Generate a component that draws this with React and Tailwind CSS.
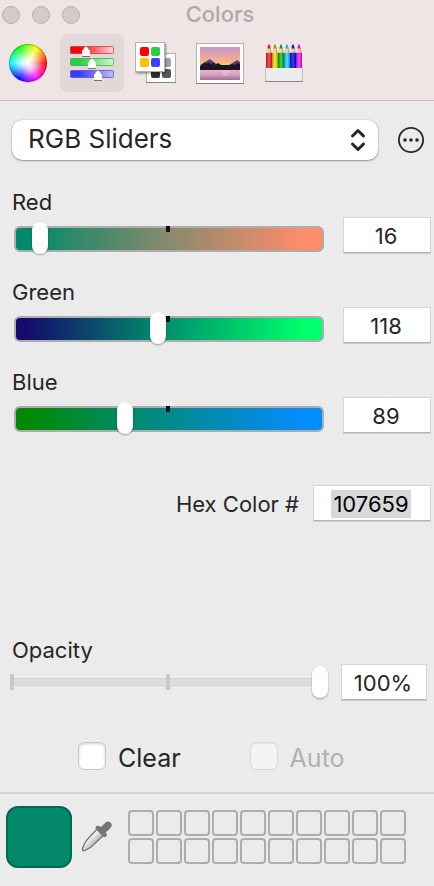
import { useState } from "react";

const TRACKS = {
  red: "bg-[linear-gradient(to_right,#00896b_4%,#848a6c_48%,#ff8c6c_94%)]",
  green: "bg-[linear-gradient(to_right,#150b6c_4%,#008a6c_46%,#00ff6c_94%)]",
  blue: "bg-[linear-gradient(to_right,#008a00_4%,#008a6c_38%,#058cff_94%)]",
};

const RANGE =
  "col-start-1 row-start-1 z-10 m-0 block h-8 w-full cursor-pointer appearance-none bg-transparent outline-none [&::-webkit-slider-runnable-track]:h-8 [&::-webkit-slider-thumb]:h-8 [&::-webkit-slider-thumb]:w-4 [&::-webkit-slider-thumb]:appearance-none [&::-webkit-slider-thumb]:rounded-full [&::-webkit-slider-thumb]:bg-white [&::-webkit-slider-thumb]:shadow-[0_1px_2px_rgba(0,0,0,0.35)]";

const FIELD =
  "h-9 shrink-0 border border-[#d6d6d6] border-b-[#b0b0b0] bg-white pt-0.5 pr-0.5 text-center text-[22px] leading-7 text-[#262626] shadow-[0_1px_0_#cfcfcf] outline-none";

const LABEL = "block text-[22px] leading-[26px]";

function WheelIcon() {
  return (
    <span className="block size-[38px] rounded-full border border-black/25 bg-[radial-gradient(circle,#fff_0%,rgba(255,255,255,0.8)_22%,rgba(255,255,255,0.3)_50%,transparent_70%),conic-gradient(from_90deg,#f00,#f0f,#00f,#0ff,#0f0,#ff0,#f00)] bg-origin-border shadow-[0_1px_1px_rgba(0,0,0,0.15)]" />
  );
}

function SlidersIcon() {
  const rows = [
    { id: "r", y: 2, from: "#ff0000", to: "#ffdada", edge: "#b8302e", x: 16 },
    { id: "g", y: 14, from: "#28cd41", to: "#ccfacb", edge: "#3c9a48", x: 22 },
    { id: "b", y: 26, from: "#3b3bff", to: "#bcbcff", edge: "#4848bc", x: 28 },
  ];
  return (
    <svg width="44" height="38" viewBox="0 0 44 38" aria-hidden="true">
      <defs>
        {rows.map((r) => (
          <linearGradient id={"bar-" + r.id} key={r.id}>
            <stop offset="0.2" stopColor={r.from} />
            <stop offset="1" stopColor={r.to} />
          </linearGradient>
        ))}
        <filter id="knob" x="-50%" y="-50%" width="200%" height="200%">
          <feDropShadow dx="0" dy="1" stdDeviation="0.7" floodOpacity="0.5" />
        </filter>
      </defs>
      {rows.map((r) => (
        <g key={r.id}>
          <rect x="0.5" y={r.y + 0.5} width="43" height="7" rx="1" fill={`url(#bar-${r.id})`} stroke={r.edge} strokeOpacity="0.7" />
          <path
            d={`M${r.x - 4} ${r.y + 5} L${r.x - 1} ${r.y + 1} Q${r.x} ${r.y} ${r.x + 1} ${r.y + 1} L${r.x + 4} ${r.y + 5} V${r.y + 9} Q${r.x + 4} ${r.y + 10} ${r.x + 3} ${r.y + 10} H${r.x - 3} Q${r.x - 4} ${r.y + 10} ${r.x - 4} ${r.y + 9} Z`}
            fill="#fff"
            filter="url(#knob)"
          />
        </g>
      ))}
    </svg>
  );
}

function PalettesIcon() {
  return (
    <svg width="42" height="42" viewBox="0 0 42 42" aria-hidden="true">
      <defs>
        <filter id="sheet" x="-20%" y="-20%" width="150%" height="150%">
          <feDropShadow dx="1" dy="1.5" stdDeviation="1" floodOpacity="0.4" />
        </filter>
      </defs>
      <rect x="11.5" y="11.5" width="29" height="29" fill="#fff" stroke="#b5b0af" />
      <path d="M11 40.500H41" stroke="#858080" />
      <rect x="27" y="16" width="9" height="9" rx="2" fill="#9fa4a8" />
      <rect x="16" y="27" width="9" height="9" rx="2" fill="#2f2f2f" />
      <rect x="27" y="27" width="9" height="9" rx="2" fill="#58585a" />
      <g filter="url(#sheet)">
        <rect x="0.5" y="0.5" width="29" height="29" fill="#fff" stroke="#b5b0af" />
      </g>
      <rect x="5" y="5" width="9" height="9" rx="2" fill="#f00" />
      <rect x="16" y="5" width="9" height="9" rx="2" fill="#28cd41" />
      <rect x="5" y="16" width="9" height="9" rx="2" fill="#ffc000" />
      <rect x="16" y="16" width="9" height="9" rx="2" fill="#4040ff" />
    </svg>
  );
}

function PictureIcon() {
  return (
    <svg width="48" height="41" viewBox="0 0 48 41" aria-hidden="true">
      <defs>
        <linearGradient id="sky" x1="0" y1="0" x2="0" y2="1">
          <stop offset="0" stopColor="#c39ac9" />
          <stop offset="0.3" stopColor="#e0a0ae" />
          <stop offset="0.65" stopColor="#fbb384" />
          <stop offset="1" stopColor="#ffe292" />
        </linearGradient>
        <linearGradient id="lake" x1="0" y1="0" x2="0" y2="1">
          <stop offset="0" stopColor="#eab2c4" />
          <stop offset="0.45" stopColor="#d9a1c4" />
          <stop offset="1" stopColor="#9a709a" />
        </linearGradient>
      </defs>
      <rect x="0.5" y="0.5" width="47" height="40" fill="#fff" stroke="#b5b0af" />
      <path d="M0 40.500H48" stroke="#858080" />
      <rect x="4" y="4" width="40" height="23" fill="url(#sky)" />
      <path d="M4 22 L9 19 L14 16 L19 20 L23 22 H33 L38 19 L41 17 L44 19 V24 L34 23 H24Z" fill="#51427c" />
      <path d="M4 23 L7 21 L9 19 L10 21 L13 19 L15 22 L17 19 L19 22 L22 20 L25 22 H33 L37 21 L39 22 L41 20 L44 21 V27 H4Z" fill="#1a1721" />
      <rect x="4" y="27" width="40" height="10" fill="url(#lake)" />
      <path d="M24 27H34L31 33H28Z" fill="#ffd2ca" opacity="0.35" />
    </svg>
  );
}

function PencilsIcon() {
  const pencils = [
    { dark: "#a31c22", mid: "#ee4640", tip: "#d11f1f" },
    { dark: "#b98b0c", mid: "#f3e03c", tip: "#b98510" },
    { dark: "#087f10", mid: "#2bd32a", tip: "#12a51a" },
    { dark: "#1388c8", mid: "#45d0ff", tip: "#24aee8" },
    { dark: "#0808a0", mid: "#1740f5", tip: "#1212c8" },
    { dark: "#a50cb0", mid: "#f53cf7", tip: "#d813cf" },
  ];
  return (
    <svg width="38" height="40" viewBox="0 0 38 40" aria-hidden="true">
      {pencils.map((p, i) => (
        <g key={p.dark} transform={`translate(${1 + i * 6} 0)`}>
          <path d="M0 11 L2 4 H4 L6 11Z" fill="#f0d3a5" />
          <path d="M3.500 4 H4 L6 11 H4.500Z" fill="#c69b67" />
          <path d="M1.400 5.500 L2.200 2 Q3 0.600 3.800 2 L4.600 5.500Z" fill={p.tip} />
          <path d="M0 26 V10 Q1 9 2 10 Q3 9 4 10 Q5 9 6 10 V26Z" fill={p.mid} />
          <path d="M0 10H1.500V26H0Z M4.500 10H6V26H4.500Z" fill={p.dark} opacity="0.8" />
        </g>
      ))}
      <rect x="0.500" y="25.500" width="37" height="13" fill="#ebebeb" stroke="#c4bebd" />
      <path d="M1 25.500H37" stroke="#f3f0ef" />
      <path d="M0 38.500H38" stroke="#8f8a8a" />
    </svg>
  );
}

function EyedropperIcon() {
  return (
    <svg width="32" height="32" viewBox="0 0 32 32" aria-hidden="true">
      <defs>
        <linearGradient id="glass" x1="0" y1="0" x2="1" y2="1">
          <stop offset="0.35" stopColor="#fff" />
          <stop offset="0.6" stopColor="#bdbdbd" />
        </linearGradient>
      </defs>
      <path
        d="M16.500 8.500 L23 15 L9.500 27.500 Q6.500 29 4 30.500 Q2 31.500 1.500 29.500 Q1.200 28.500 2 27.500 Q3.200 24 5 21Z"
        fill="url(#glass)"
        stroke="#757575"
        strokeWidth="1.300"
      />
      <path
        d="M15 6.500 Q17 4.800 19 6.500 L20 7 L24.500 2.500 Q27 0.500 29.500 2.500 Q32 5 29.500 8 L24.700 12.500 L25.500 13.500 Q26.700 15.500 25 16.800 Q23.300 18 21.500 16 L15.500 10 Q13.700 8 15 6.500Z"
        fill="#757575"
      />
    </svg>
  );
}

function MoreIcon() {
  return (
    <svg width="26" height="26" viewBox="0 0 26 26" aria-hidden="true">
      <circle cx="13" cy="13" r="12.1" fill="none" stroke="#262626" strokeWidth="1.8" />
      <circle cx="7" cy="13" r="1.800" fill="#262626" />
      <circle cx="13" cy="13" r="1.800" fill="#262626" />
      <circle cx="19" cy="13" r="1.800" fill="#262626" />
    </svg>
  );
}

function ChannelRow({ id, label, track, value, onChange }) {
  return (
    <div className="space-y-0.5">
      <label htmlFor={id} className={LABEL}>
        {label}
      </label>
      <div className="flex h-[37px] items-end gap-[19px] pl-0.5">
        <div className="grid min-w-0 flex-1 items-end">
          <div className={`col-start-1 row-start-1 mb-0.5 flex h-[26px] justify-center rounded-md border-2 border-[#acacac] bg-origin-border ${track}`}>
            <span className="-mt-0.5 mr-0.5 h-1.5 w-1 bg-[#111]" />
          </div>
          <input
            id={id}
            type="range"
            min="0"
            max="255"
            value={value}
            onChange={(e) => onChange(Number(e.target.value))}
            className={RANGE}
          />
        </div>
        <input
          type="text"
          aria-label={`${label} value`}
          value={value}
          onChange={(e) => onChange(Number(e.target.value) || 0)}
          className={`${FIELD} mb-auto w-[88px]`}
        />
      </div>
    </div>
  );
}

export default function App() {
  const [red, setRed] = useState(16);
  const [green, setGreen] = useState(118);
  const [blue, setBlue] = useState(89);
  const [opacity, setOpacity] = useState(100);
  const hex = [red, green, blue].map((c) => c.toString(16).padStart(2, "0")).join("");

  const tab = "flex h-[58px] w-16 shrink-0 items-center justify-center rounded-lg";

  return (
    <div className="min-h-screen bg-[#ebebeb] font-['Inter','Liberation_Sans',sans-serif] text-[#262626]">
      <header className="border-b border-[#c9c4c3] bg-[#eee5e4] pb-2">
        <div className="grid h-[34px] grid-cols-[1fr_auto_1fr] items-start pl-1.5">
          <div className="-ml-1 flex gap-3 pt-1.5">
            <button type="button" aria-label="Close" className="size-[18px] rounded-full border border-[#b9b1b0] bg-[#d3cac9]" />
            <button type="button" aria-label="Minimize" className="size-[18px] rounded-full border border-[#b9b1b0] bg-[#d3cac9]" />
            <button type="button" aria-label="Zoom" className="size-[18px] rounded-full border border-[#b9b1b0] bg-[#d3cac9]" />
          </div>
          <h1 className="text-[22px] leading-7 font-medium text-[#b1a9a8]">Colors</h1>
        </div>
        <nav className="flex">
          <button type="button" aria-label="Color Wheel" className="flex h-[58px] w-[60px] shrink-0 items-center pl-[9px]">
            <WheelIcon />
          </button>
          <button type="button" aria-label="Color Sliders" className={`${tab} bg-[#e1d9d8]`}>
            <SlidersIcon />
          </button>
          <button type="button" aria-label="Color Palettes" className={tab}>
            <PalettesIcon />
          </button>
          <button type="button" aria-label="Image Palettes" className={tab}>
            <PictureIcon />
          </button>
          <button type="button" aria-label="Pencils" className={tab}>
            <PencilsIcon />
          </button>
        </nav>
      </header>

      <main>
        <div className="flex items-center gap-5 px-3 pt-[19px] pr-[10px]">
          <div className="grid min-w-0 flex-1 items-center">
            <select
              aria-label="Slider mode"
              className="col-start-1 row-start-1 h-10 w-full appearance-none rounded-[10px] bg-white pb-0.5 pl-4 text-[26px] leading-8 shadow-[0_0_1px_rgba(0,0,0,0.35),0_1px_2px_rgba(0,0,0,0.35)] outline-none"
            >
              <option>RGB Sliders</option>
            </select>
            <svg
              className="pointer-events-none col-start-1 row-start-1 mr-3 justify-self-end"
              width="16"
              height="24"
              viewBox="0 0 16 24"
              fill="none"
              stroke="#262626"
              strokeWidth="3"
              strokeLinecap="round"
              strokeLinejoin="round"
              aria-hidden="true"
            >
              <path d="M2.500 8 L8 2.500 L13.500 8 M2.500 16 L8 21.500 L13.500 16" />
            </svg>
          </div>
          <button type="button" aria-label="More options" className="shrink-0">
            <MoreIcon />
          </button>
        </div>

        <section className="space-y-[25px] pt-[29px] pr-[3px] pl-3">
          <ChannelRow id="red" label="Red" track={TRACKS.red} value={red} onChange={setRed} />
          <ChannelRow id="green" label="Green" track={TRACKS.green} value={green} onChange={setGreen} />
          <ChannelRow id="blue" label="Blue" track={TRACKS.blue} value={blue} onChange={setBlue} />
        </section>

        <div className="flex items-center justify-end gap-3.5 pt-[51px] pr-[3px]">
          <label htmlFor="hex" className={`${LABEL} pt-0.5`}>
            Hex Color #
          </label>
          <div className={`${FIELD} flex w-[118px] items-center justify-center`}>
            <input id="hex" type="text" readOnly value={hex} className="h-7 w-20 bg-[#d9d9d9] text-center text-black outline-none" />
          </div>
        </div>

        <section className="pt-[116px] pr-[7px] pl-[10px]">
          <label htmlFor="opacity" className={`${LABEL} pl-0.5`}>
            Opacity
          </label>
          <div className="flex items-center gap-[13px] pt-px">
            <div className="grid min-w-0 flex-1 items-center">
              <div className="col-start-1 row-start-1 h-2 border-y border-[#d3d3d3] bg-[#dddddd]" />
              <div className="col-start-1 row-start-1 mr-0.5 flex justify-between">
                <span className="h-4 w-1 rounded-[1px] bg-[#c8c8c8]" />
                <span className="h-4 w-1 rounded-[1px] bg-[#c8c8c8]" />
                <span className="h-4 w-1 rounded-[1px] bg-[#c8c8c8]" />
              </div>
              <input
                id="opacity"
                type="range"
                min="0"
                max="100"
                value={opacity}
                onChange={(e) => setOpacity(Number(e.target.value))}
                className={RANGE}
              />
            </div>
            <input
              type="text"
              aria-label="Opacity value"
              value={`${opacity}%`}
              onChange={(e) => setOpacity(parseInt(e.target.value, 10) || 0)}
              className={`${FIELD} w-[86px]`}
            />
          </div>
        </section>

        <div className="flex gap-[69px] pt-[42px] pl-[78px]">
          <label className="flex h-7 items-center gap-3 text-[25px] leading-8">
            <input
              type="checkbox"
              className="size-7 appearance-none rounded-md border border-[#c9c9c9] bg-white shadow-[inset_0_1px_3px_rgba(0,0,0,0.18)]"
            />
            <span className="pt-1">Clear</span>
          </label>
          <label className="flex h-7 items-center gap-3 text-[25px] leading-8 text-[#b0b0b0]">
            <input
              type="checkbox"
              disabled
              className="size-7 appearance-none rounded-md border border-[#d9d9d9] bg-[#f4f4f4] shadow-[inset_0_1px_2px_rgba(0,0,0,0.06)]"
            />
            <span className="pt-1">Auto</span>
          </label>
        </div>
      </main>

      <footer className="mt-[22px] flex items-start border-t-2 border-[#d3d3d3] px-1.5 pt-3 pb-[18px]">
        <button type="button" aria-label="Current color" className="h-[62px] w-[66px] shrink-0 rounded-xl border-2 border-[#006a50] bg-[#04896b]" />
        <button type="button" aria-label="Pick color from screen" className="mt-3.5 ml-[9px] shrink-0">
          <EyedropperIcon />
        </button>
        <div className="mt-1 ml-[15px] grid grid-cols-10 gap-0.5">
          {Array.from({ length: 20 }, (_, i) => (
            <button key={i} type="button" aria-label={`Saved color ${i + 1}`} className="size-[26px] rounded border-2 border-[#adadad]" />
          ))}
        </div>
      </footer>
    </div>
  );
}
